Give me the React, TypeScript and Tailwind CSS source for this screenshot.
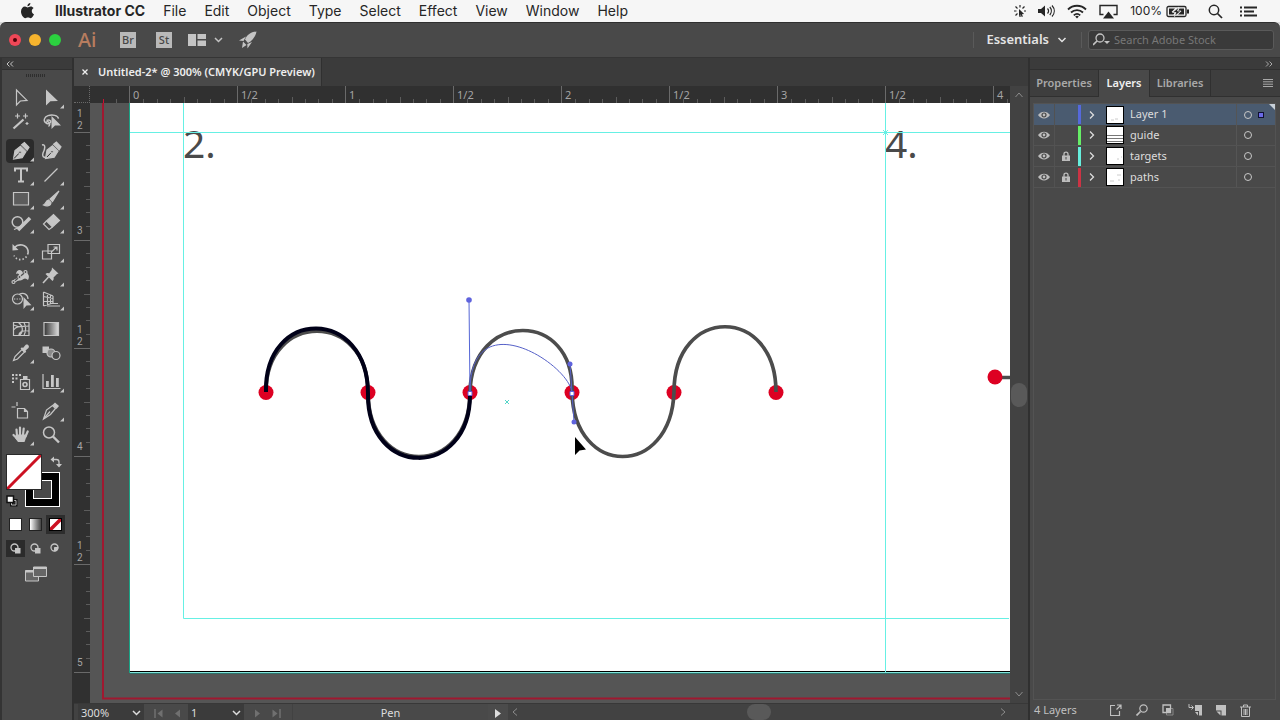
import type { ReactNode } from "react";

type Tool = { name: string; icon: ReactNode; more?: boolean; active?: boolean };
type Layer = { name: string; color: string; locked: boolean; selected?: boolean; sketch: string };

const nib = (
  <>
    <path d="M4.5 20 6 11.5l5.5-4.3 5.5 5.5-3.8 6z" fill="currentColor" />
    <path d="m12.6 5.8 2.8-2.2 4.6 4.7-1.9 3z" fill="currentColor" />
    <path d="m5 19.5 5.3-5.5" stroke="#2b2b2b" strokeWidth="1" />
    <circle cx="11" cy="13.2" r="1.3" fill="#2b2b2b" />
  </>
);

const toolGroups: Tool[][] = [
  [
    { name: "Selection", icon: <path d="M7.5 4v15l3.8-4 6.7-.6z" /> },
    { name: "Direct Selection", more: true, icon: <path d="M7 3.5v16l4.4-4.3 7.6-.2z" fill="currentColor" stroke="none" /> },
    {
      name: "Magic Wand",
      icon: (
        <>
          <path d="m4.5 18.5 10-9" strokeWidth="2.2" />
          <path d="M8.5 3.5v5M6 6h5M16.5 3.5v5M14 6h5M18 12v3M16.5 13.5h3" strokeWidth="1.2" />
        </>
      ),
    },
    {
      name: "Lasso",
      icon: (
        <>
          <path d="M7 13c-3-2-2-6 2-7.4 4.5-1.5 10-.2 10.5 3M7.500 10.5c3-1.5 5.5 1 3.500 2.500s-5 .5-3.500-1 5 2 2 4.500" strokeWidth="1.400" />
          <path d="M12.500 6v13l3.500-3.500 6 0z" fill="currentColor" stroke="none" />
        </>
      ),
    },
  ],
  [
    { name: "Pen", more: true, active: true, icon: nib },
    {
      name: "Curvature",
      icon: (
        <>
          <g transform="translate(2 -.5)">{nib}</g>
          <path d="M3 6c4-1 3 4 1 8-1 3 0 5 4 4.500" strokeWidth="1.500" />
        </>
      ),
    },
    { name: "Type", more: true, icon: <path d="M6 8.500V5.500h12v3M12 5.500v13M9 18.500h6" strokeWidth="2" /> },
    { name: "Line Segment", more: true, icon: <path d="m5.500 18.500 13-13" /> },
    { name: "Rectangle", more: true, icon: <path d="M4.500 5.500h15v12.500h-15z" fill="#5c5c5c" /> },
    {
      name: "Paintbrush",
      more: true,
      icon: (
        <>
          <path d="m20 4-9 8 2.500 2.500z" fill="currentColor" />
          <path d="M9.500 13c-3 .5-2 3.500-5 5 3 1.500 7.500 1 7.500-2.500z" fill="currentColor" />
        </>
      ),
    },
    {
      name: "Shaper",
      more: true,
      icon: (
        <>
          <circle cx="8.500" cy="11" r="5.300" strokeWidth="1.500" />
          <path d="m9 19 12-12" strokeWidth="3.500" />
          <path d="m5 18.500 5-2" />
        </>
      ),
    },
    {
      name: "Eraser",
      more: true,
      icon: (
        <>
          <path d="m7.500 10 7-6.500 6 6-7 6.500z" fill="currentColor" />
          <path d="m7.500 10-3 3 5.500 5.500 3.500-2.500" />
        </>
      ),
    },
  ],
  [
    {
      name: "Rotate",
      more: true,
      icon: (
        <>
          <path d="M5.500 7.500c4-4.500 12-3 13.500 3 .3 1.500.2 3-.5 4" strokeWidth="1.600" />
          <path d="M17.500 16.500c-3 4.500-10 4-12.500-1" strokeDasharray="1.500 2" strokeWidth="1.600" />
          <path d="M3.500 4v6.500l6-.5z" fill="currentColor" stroke="none" />
        </>
      ),
    },
    {
      name: "Scale",
      more: true,
      icon: (
        <>
          <path d="M9 4.500h11.500v9H9zM3.500 11h9v8h-9z" />
          <path d="m13 11.500 4.500-4.500M14.500 7h3.500v3.500" />
        </>
      ),
    },
    {
      name: "Width",
      more: true,
      icon: (
        <>
          <path d="M4 18c1-5 5-2 6-6 .5-3-2-3-3-2 .5-4 5-6 7-1 1.500 1 2-1 4-2-1 2 4 4 1 9-2-2-4-2-6 0-2.500 1-4 0-6 2z" fill="currentColor" stroke="none" />
          <path d="m4.500 18 12-10" stroke="#494949" />
          <circle cx="4.500" cy="18" r="1.500" />
          <circle cx="16.500" cy="8" r="1.500" fill="#494949" />
          <circle cx="10.500" cy="13" r="1.500" fill="#494949" />
        </>
      ),
    },
    {
      name: "Puppet Warp",
      more: true,
      icon: (
        <>
          <path d="m13 3.500 6.500 6-1.500.5-3.500 3.500c.5 1.500 0 2.500-1 3.500l-7-7c1-1 2.500-1.200 3.500-.5L12.700 6z" fill="currentColor" stroke="none" />
          <path d="m9.500 13-5.500 6" strokeWidth="1.600" />
        </>
      ),
    },
    {
      name: "Shape Builder",
      more: true,
      icon: (
        <>
          <circle cx="8.500" cy="11" r="5" />
          <path d="M10 6.500c5-3 9 .5 9 4.500" />
          <path d="M5 11h9" strokeDasharray="1.300 1.300" />
          <path d="M14.500 9v12l3-3.500 5-.3z" fill="currentColor" stroke="none" />
        </>
      ),
    },
    {
      name: "Perspective Grid",
      more: true,
      icon: (
        <>
          <path d="M4.500 4v14M8.500 5.500v11.500M11.500 7v9M14 8v7.500M4.500 4 14 8M4.500 8.500 14 10.500M4.500 13.500h9.500M4.500 18l9.500-3" />
          <path d="M8 18h13M13 15.500h6" strokeWidth="1" />
        </>
      ),
    },
  ],
  [
    {
      name: "Mesh",
      icon: (
        <>
          <path d="M4.500 5.500h15.500v13H4.500z" />
          <path d="M4.500 13c4-5 8-3 15.500-4M9.500 5.500c5 4 5 9 1 13M15 5.500c2 4 2 9 0 13M4.500 8l6 2M10 18c0-3 4-5 10-4" />
        </>
      ),
    },
    {
      name: "Gradient",
      icon: (
        <>
          <defs>
            <linearGradient id="toolGradient">
              <stop offset="0" stopColor="#333" />
              <stop offset="1" stopColor="#ddd" />
            </linearGradient>
          </defs>
          <path d="M5 5.500h14.500v13H5z" fill="url(#toolGradient)" />
        </>
      ),
    },
    {
      name: "Eyedropper",
      more: true,
      icon: (
        <>
          <path d="m4.500 19.500 1.500-4 7-7 2.500 2.500-7 7z" />
          <path d="m11.500 7.500 1.500-1.200 1 .7 2.500-3c2-1.500 4.500 1 3 3l-3 2.500.7 1-1.200 1.500z" fill="currentColor" stroke="none" />
        </>
      ),
    },
    {
      name: "Blend",
      icon: (
        <>
          <path d="M3.500 5.500H10V12H3.500z" fill="currentColor" stroke="none" />
          <circle cx="12" cy="12" r="4" fill="#8a8a8a" />
          <circle cx="17" cy="14.500" r="4" fill="#494949" />
        </>
      ),
    },
  ],
  [
    {
      name: "Symbol Sprayer",
      more: true,
      icon: (
        <>
          <path d="M11.500 9.500h9v10h-9z" />
          <path d="M14 6h4.500v3H14zM3 4h2v2H3zM6.500 4h2v2h-2zM10 4h2v2h-2zM3 7.500h2v2H3zM6.500 7.500h2v2h-2zM3 11h2v2H3z" fill="currentColor" stroke="none" />
          <circle cx="16" cy="14.500" r="2" strokeWidth="1.600" />
        </>
      ),
    },
    {
      name: "Column Graph",
      more: true,
      icon: (
        <>
          <path d="M4 4v14.500h17.500" />
          <path d="M7 11h2.800v6H7zM12 5h2.800v12H12zM17 8h2.800v9H17z" fill="currentColor" stroke="none" />
        </>
      ),
    },
  ],
  [
    { name: "Artboard", icon: <path d="M8.500 9.500h7l3 3v6.500h-10zM2.500 8h4M8 3v4M15.500 9.500V12.500h3" /> },
    {
      name: "Slice",
      more: true,
      icon: (
        <>
          <path d="m4.500 20 3-9 6-4.500 3 3-5 6z" />
          <path d="m13.500 6 2.500-2.500 4 3.500-2.500 3z" fill="currentColor" stroke="none" />
          <path d="m5 19.500 6-7" />
        </>
      ),
    },
    {
      name: "Hand",
      more: true,
      icon: (
        <>
          <path d="M8 13 7.500 6.500M11 12V4.500M14 12l.7-6.500M16.500 13.500l2.200-5M8.500 16 4.500 12" strokeWidth="2.200" strokeLinecap="round" />
          <path d="M7 11.500h9.500l1 2-2 5.500H9l-3-4z" fill="currentColor" stroke="none" />
        </>
      ),
    },
    {
      name: "Zoom",
      icon: (
        <>
          <circle cx="10" cy="9.500" r="5.500" strokeWidth="1.500" />
          <path d="m14 13.500 6 6" strokeWidth="2.400" />
        </>
      ),
    },
  ],
];

const layers: Layer[] = [
  { name: "Layer 1", color: "bg-[#5569dc]", locked: false, selected: true, sketch: "M4 13h3M8 12h3" },
  { name: "guide", color: "bg-[#66ee66]", locked: false, sketch: "" },
  { name: "targets", color: "bg-[#66eedd]", locked: true, sketch: "M10 11h2M14 9h1" },
  { name: "paths", color: "bg-[#cc3344]", locked: true, sketch: "M3 12h4M10 6h4M11 11h2" },
];

const menus = ["File", "Edit", "Object", "Type", "Select", "Effect", "View", "Window", "Help"];
const rulerX = ["0", "1/2", "1", "1/2", "2", "1/2", "3", "1/2", "4"];
const rulerY = ["12", "3", "12", "4", "12", "5"];
const ticks = [1, 2, 3, 4, 5, 6, 7];

function Svg({ w, h, children, className = "" }: { w: number; h: number; children: ReactNode; className?: string }) {
  return (
    <svg width={w} height={h} viewBox={`0 0 ${w} ${h}`} fill="none" stroke="currentColor" className={`shrink-0 ${className}`} aria-hidden="true">
      {children}
    </svg>
  );
}

function MenuBar() {
  return (
    <header className="flex h-[22px] shrink-0 items-center bg-[#f6f6f6] text-sm leading-5 text-[#262626]">
      <button aria-label="Apple" className="ml-5 mr-5">
        <Svg w={15} h={18}>
          <path
            d="M10.400 1c.1 1.800-1.300 3.300-3 3.300C7.300 2.600 8.700 1.100 10.400 1zM7.600 5.400c.8 0 1.700-.8 3.100-.8 1.100 0 2.200.6 2.900 1.500-2.600 1.500-2.200 5.100.4 6.200-.6 1.700-2 3.900-3.300 3.900-1 0-1.500-.6-2.700-.6-1.300 0-1.800.6-2.700.6C3.300 16.200 1 12.600 1 9.600c0-3 1.900-5 4-5 1.200 0 2 .8 2.600.8z"
            fill="currentColor"
            stroke="none"
          />
        </Svg>
      </button>
      <nav className="flex flex-1 gap-[18px]">
        <button className="whitespace-nowrap font-bold">Illustrator CC</button>
        {menus.map((m) => (
          <button key={m}>{m}</button>
        ))}
      </nav>
      <div className="flex items-center pr-[22px]">
        <Svg w={14} h={14} className="mr-[10px]">
          <path d="M7 1v2.500M2.500 2.500 4.500 4.500M1 7h2.500M2.500 11.500l2-2M11.500 2.500l-2 2M13 7h-2M7 13v-2" strokeWidth="1.200" />
          <path d="M6 5v7l1.700-1.400 1 2.400 1.200-.5-1-2.300 2.200-.2z" fill="currentColor" stroke="none" />
        </Svg>
        <Svg w={18} h={14} className="mr-3">
          <path d="M1 5h3l4-3.500v11L4 9H1z" fill="currentColor" stroke="none" />
          <path d="M10.500 4.500c1.300 1.500 1.300 3.500 0 5M12.800 3c2 2.300 2 5.700 0 8M15 1.500c3 3.300 3 7.700 0 11" strokeWidth="1.200" />
        </Svg>
        <Svg w={20} h={15} className="mr-3">
          <path d="M1 5.500c5-5 13-5 18 0M4 8.500c3.400-3.300 8.600-3.300 12 0M6.800 11.300c2-1.800 4.400-1.800 6.400 0" strokeWidth="1.800" />
          <path d="m10 14.500-1.800-2c1-1 2.600-1 3.600 0z" fill="currentColor" stroke="none" />
        </Svg>
        <Svg w={19} h={15} className="mr-3">
          <path d="M4.500 10.500H1v-9h17v9h-3.500" strokeWidth="1.400" />
          <path d="m9.500 7.500 5.500 7H4z" fill="currentColor" stroke="none" />
        </Svg>
        <span className="mr-1 text-xs">100%</span>
        <Svg w={24} h={13} className="mr-[18px]">
          <rect x="1" y="1.500" width="19" height="10" rx="1.500" strokeWidth="1.300" />
          <path d="M3 3.500h6L5.500 7H9l-1.500 2.500H3zM18 9.500h-6L15.500 6H12l1.500-2.500H18z" fill="currentColor" stroke="none" />
          <path d="M13 2 6.500 7.500H10L8.500 11.500 15 6h-3.500z" fill="currentColor" stroke="#f6f6f6" strokeWidth=".7" />
          <path d="M22 4.500v4" strokeWidth="2" />
        </Svg>
        <Svg w={15} h={15} className="mr-4">
          <circle cx="6" cy="6" r="4.700" strokeWidth="1.500" />
          <path d="m9.500 9.500 4.500 4.500" strokeWidth="1.700" />
        </Svg>
        <Svg w={19} h={13}>
          <path d="M5 2.500h13M5 6.500h10M5 10.500h13M1 2.500h2M1 6.500h2M1 10.500h2" strokeWidth="1.800" />
        </Svg>
      </div>
    </header>
  );
}

function AppBar() {
  return (
    <div className="flex h-[35px] shrink-0 items-center rounded-t-md border-t border-[#2f2f2f] bg-[#494949] text-[#c4c4c4]">
      <div className="ml-[9px] flex gap-2">
        <button aria-label="Close window" className="flex size-3 items-center justify-center rounded-full bg-[#ef4757]">
          <span className="size-1 rounded-full bg-[#4a0008]" />
        </button>
        <button aria-label="Minimize window" className="size-3 rounded-full bg-[#f6b42e]" />
        <button aria-label="Zoom window" className="size-3 rounded-full bg-[#2bd03f]" />
      </div>
      <span className="ml-[17px] w-[22px] text-xl leading-6 font-medium text-[#b87d5f]">Ai</span>
      <button className="ml-5 h-4 w-4 bg-[#b9b9b9] text-[11px] leading-4 font-medium text-[#474747]">Br</button>
      <button className="ml-5 h-4 w-4 bg-[#b9b9b9] text-[11px] leading-4 font-medium text-[#474747]">St</button>
      <button aria-label="Arrange documents" className="ml-4 flex items-center gap-2">
        <Svg w={18} h={12}>
          <path d="M0 0h8v12H0zM9.500 0H18v5H9.500zM9.500 6.500H18V12H9.500z" fill="currentColor" stroke="none" />
        </Svg>
        <Svg w={9} h={6}>
          <path d="m1 1 3.500 3.500L8 1" strokeWidth="1.500" />
        </Svg>
      </button>
      <button aria-label="GPU performance" className="ml-4">
        <Svg w={18} h={18}>
          <path d="M17.500.500C12 1 8 3.500 6 8.500l3 3.500c4-2 7.500-6 8.500-11.500z" fill="currentColor" stroke="none" />
          <path d="M7 5.500 0 9.500l4.500.5zM13 11l-4.500 6.500-.2-4.500zM4 10.500 7.500 14l-4.500 3z" fill="currentColor" stroke="none" />
        </Svg>
      </button>
      <div className="flex-1" />
      <div className="h-4 w-px bg-[#5a5a5a]" />
      <button className="ml-3 flex items-center gap-2 text-[13px] font-semibold text-[#e4e4e4]">
        Essentials
        <Svg w={10} h={6}>
          <path d="m1.500 1 3.500 3.500L8.500 1" strokeWidth="1.500" />
        </Svg>
      </button>
      <div className="ml-[14px] h-4 w-px bg-[#5a5a5a]" />
      <label className="mx-[6px] flex h-5 w-[186px] items-center rounded-[3px] border border-[#5a5a5a] bg-[#3a3a3a] pl-1">
        <Svg w={17} h={14}>
          <circle cx="7" cy="5" r="4" strokeWidth="1.300" />
          <path d="M4 8 0 12" strokeWidth="1.700" />
          <path d="M11 8h6l-3 3z" fill="currentColor" stroke="none" />
        </Svg>
        <input aria-label="Search Adobe Stock" placeholder="Search Adobe Stock" className="ml-1 w-full bg-transparent text-[11px] outline-none placeholder:text-[#777777]" />
      </label>
    </div>
  );
}

function Toolbar() {
  return (
    <aside className="flex w-[72px] shrink-0 flex-col border-l-2 border-[#343434] bg-[#494949] text-[#c6c6c6]">
      <div className="flex h-3 items-center border-b border-[#303030] bg-[#3b3b3b] pl-1">
        <Svg w={8} h={6}>
          <path d="M3.500.5 1 3l2.500 2.500M7 .5 4.500 3 7 5.500" />
        </Svg>
      </div>
      <div className="flex h-4 gap-px pl-6 pt-1">
        {Array.from({ length: 10 }, (_, i) => (
          <span key={i} className="h-[3px] w-px bg-[#2e2e2e]" />
        ))}
      </div>
      <div className="flex flex-col gap-[5px] pl-1">
        {toolGroups.map((group, i) => (
          <div key={i} className="grid grid-cols-[30px_30px]">
            {group.map((t) => (
              <button key={t.name} aria-label={t.name} title={t.name} className={t.active ? "h-6 w-7 rounded-sm bg-[#2b2b2b]" : "h-6"}>
                <svg width="30" height="24" viewBox="-3 0 30 24" fill="none" stroke="currentColor" strokeWidth="1.200" aria-hidden="true" className="max-w-none">
                  {t.icon}
                  {t.more && <path d="M25 18.500v4h-4z" fill="currentColor" stroke="none" />}
                </svg>
              </button>
            ))}
          </div>
        ))}
      </div>
      <div className="relative mt-[7px] ml-1 h-[54px] w-14">
        <button aria-label="Stroke" className="absolute left-[19px] top-[18px] flex size-[35px] items-center justify-center border border-white bg-black">
          <span className="size-[19px] border border-white bg-[#494949]" />
        </button>
        <button aria-label="Fill" className="absolute left-0 top-0 size-9 border border-[#2a2a2a] bg-white">
          <Svg w={34} h={34}>
            <path d="M0 34 34 0" stroke="#cc1122" strokeWidth="3" />
          </Svg>
        </button>
        <button aria-label="Swap fill and stroke" className="absolute left-11 top-0.5">
          <Svg w={12} h={12}>
            <path d="M2.500 3.500h4c1.500 0 2.500 1 2.500 2.500v3" strokeWidth="1.300" />
            <path d="M4 .5v6l-3.500-3zM6 8h6l-3 3.500z" fill="currentColor" stroke="none" />
          </Svg>
        </button>
        <button aria-label="Default fill and stroke" className="absolute left-0 top-[41px]">
          <Svg w={12} h={12}>
            <path d="M5.500 5.500H10V10H5.500z" stroke="#111" strokeWidth="3" />
            <path d="M5.500 5.500H10V10H5.500z" stroke="#bbb" strokeWidth="1" />
            <path d="M1 1h6.500v6.500H1z" fill="#fff" stroke="#111" strokeWidth="1.500" />
          </Svg>
        </button>
      </div>
      <div className="mt-[7px] ml-[3px] grid w-[60px] grid-cols-3 place-items-center">
        <button aria-label="Color" className="flex size-[19px] items-center justify-center">
          <span className="size-[13px] border border-[#222222] bg-white" />
        </button>
        <button aria-label="Gradient fill" className="flex size-[19px] items-center justify-center">
          <span className="size-[13px] border border-[#222222] bg-linear-to-r from-white to-[#444444]" />
        </button>
        <button aria-label="None" className="flex size-[19px] items-center justify-center bg-[#2d2d2d]">
          <span className="size-[13px] border border-black bg-white">
            <Svg w={11} h={11}>
              <path d="M0 11 11 0" stroke="#cc1122" strokeWidth="3.500" />
            </Svg>
          </span>
        </button>
      </div>
      <div className="mt-[6px] ml-[3px] grid w-[60px] grid-cols-3 place-items-center">
        {["Draw Normal", "Draw Behind", "Draw Inside"].map((mode, i) => (
          <button key={mode} aria-label={mode} className={i === 0 ? "flex h-[17px] w-[19px] items-center justify-center bg-[#2b2b2b]" : "flex h-[17px] w-[19px] items-center justify-center"}>
            <Svg w={11} h={11}>
              <circle cx="4.500" cy="4.500" r="3.500" strokeWidth="1.300" />
              {i < 2 ? (
                <path d="M5 5h5.500v5.500H5z" fill="currentColor" stroke="none" />
              ) : (
                <path d="M4.500 4.500H8A3.500 3.500 0 0 1 4.500 8z" fill="currentColor" />
              )}
            </Svg>
          </button>
        ))}
      </div>
      <button aria-label="Change screen mode" className="mt-[9px] ml-[23px] self-start">
        <Svg w={22} h={16}>
          <path d="M.5 4.500h13v10.500H.5z" fill="#666" />
          <path d="M8.500 1h13v9.500h-13z" fill="#666" />
          <path d="M8.500 2h13M.5 5.500h8" strokeWidth="2" />
        </Svg>
      </button>
    </aside>
  );
}

function TopRuler() {
  return (
    <div className="flex h-[17px] shrink-0 overflow-hidden bg-[#303030] text-[11px] leading-[17px] text-[#a4a4a4]">
      <div className="h-full w-4 shrink-0 border-r border-b border-dotted border-[#6a6a6a]" />
      <div className="flex w-[39px] shrink-0 items-end justify-end gap-3 pr-3">
        <span className="h-1 w-px bg-[#cc1133]" />
        <span className="h-1 w-px bg-[#5c5c5c]" />
      </div>
      {rulerX.map((label, i) => (
        <div key={i} className="grid w-[108px] shrink-0 grid-cols-8 items-end border-l border-[#6a6a6a]">
          <span className="self-start whitespace-nowrap pl-[3px]">{label}</span>
          {ticks.map((t) => (
            <span key={t} className={t === 4 ? "h-[6px] w-px bg-[#5c5c5c]" : "h-1 w-px bg-[#5c5c5c]"} />
          ))}
        </div>
      ))}
    </div>
  );
}

function SideRuler() {
  return (
    <div className="w-4 shrink-0 overflow-hidden bg-[#303030] font-['Roboto'] text-[10px] leading-3 text-[#a4a4a4]">
      {rulerY.map((label, i) => (
        <div key={i} className={i === 0 ? "flex h-[30px] items-end border-b border-[#6a6a6a]" : "grid h-[108px] grid-cols-2 border-b border-[#6a6a6a]"}>
          <span className={label.length > 1 ? "flex flex-col self-end pl-[3px]" : "flex flex-col self-end pb-[3px] pl-[3px]"}>
            {label.split("").map((c) => (
              <span key={c}>{c}</span>
            ))}
          </span>
          {i > 0 && (
            <span className="grid grid-rows-8 justify-items-end">
              {ticks.map((t) => (
                <span key={t} className={t === 4 ? "h-px w-[6px] self-end bg-[#5c5c5c]" : "h-px w-1 self-end bg-[#5c5c5c]"} />
              ))}
            </span>
          )}
        </div>
      ))}
    </div>
  );
}

function Canvas() {
  return (
    <main className="relative min-w-0 flex-1 overflow-hidden bg-[#555555]">
      <svg width="920" height="600" viewBox="90 103 920 600" fill="none" className="absolute left-0 top-0 max-w-none">
        <path d="M103 103v595.500h910" stroke="#a01830" strokeWidth="2" />
        <path d="M130 103h880v568H130z" fill="#fff" />
        <path d="M130 671.500h880" stroke="#000" />
        <path d="M130 673.500h880" stroke="#2f7069" />
        <path d="M129.500 103v570" stroke="#1aa385" />
        <path d="M130 672.500h880" stroke="#7fe3da" />
        <text x="183" y="158" fontSize="39" fill="#4a4a4a" fontFamily="'Noto Sans', sans-serif">2.</text>
        <text x="885" y="158" fontSize="39" fill="#4a4a4a" fontFamily="'Noto Sans', sans-serif">4.</text>
        <path d="M183.500 103v515.500H1009M130 132.500h880" stroke="#66f0e4" />
        <path d="M885.500 103v569" stroke="#66f0e4" />
        <path d="m883 130 5 5m0-5-5 5" stroke="#66f0e4" />
        {[266, 368, 470, 572, 674, 776].map((x) => (
          <circle key={x} cx={x} cy="392.500" r="7.500" fill="#dd0022" />
        ))}
        <path d="M995 377.500h15" stroke="#4c4c4c" strokeWidth="3.500" />
        <circle cx="995" cy="377" r="7.500" fill="#dd0022" />
        <path
          d="M266 392C266 311 368 311 368 392C368 478 470 478 470 392C472 310 575 310 572 392C574 478 671 478 674 392C674 305 776 305 776 392"
          stroke="#4c4c4c"
          strokeWidth="3.700"
        />
        <path d="M266 392C264 307 368 307 368 394C367 479 470 479 470 395" stroke="#000018" strokeWidth="4" />
        <path d="M470 393 469 300" stroke="#5566d6" />
        <path d="M470 393C469 300 570 364 572 393M570 364 572 393 574 422" stroke="#5560c8" />
        <g fill="#5f63dd">
          <circle cx="469" cy="300" r="2.800" />
          <circle cx="570" cy="364" r="2.500" />
          <circle cx="574" cy="422" r="2.500" />
        </g>
        <path d="M468 391.500h4v4h-4zM570 391.500h4v4h-4z" fill="#fff" stroke="#5f63dd" />
        <path d="m505 400 4 4m0-4-4 4" stroke="#55d5c8" />
        <path d="M575 437v18l4.500-4.500 6.500-1z" fill="#000" />
      </svg>
    </main>
  );
}

function StatusBar() {
  return (
    <footer className="flex h-[17px] shrink-0 items-stretch border-t border-[#383838] bg-[#424242] text-[11px] leading-4 text-[#dddddd]">
      <div className="relative ml-1 flex w-[66px] items-center bg-[#3b3b3b] pt-0.5">
        <select aria-label="Zoom level" className="w-full appearance-none bg-transparent pl-[3px] outline-none" defaultValue="300%">
          <option>300%</option>
        </select>
        <Svg w={9} h={6} className="pointer-events-none absolute right-[3px]">
          <path d="m1 1 3.500 3.500L8 1" strokeWidth="1.500" />
        </Svg>
      </div>
      <div className="flex items-center gap-3 bg-[#494949] pt-0.5 pl-[10px] pr-2 text-[#707070]">
        <button aria-label="First artboard">
          <Svg w={9} h={9}>
            <path d="M1 0v9" strokeWidth="1.500" />
            <path d="M8.500.5v8l-5-4z" fill="currentColor" stroke="none" />
          </Svg>
        </button>
        <button aria-label="Previous artboard">
          <Svg w={5} h={9}>
            <path d="M5 .5v8l-5-4z" fill="currentColor" stroke="none" />
          </Svg>
        </button>
      </div>
      <div className="relative flex w-[56px] items-center bg-[#3b3b3b] pt-0.5">
        <select aria-label="Artboard" className="w-full appearance-none bg-transparent pl-[3px] outline-none" defaultValue="1">
          <option>1</option>
        </select>
        <Svg w={9} h={6} className="pointer-events-none absolute right-[3px]">
          <path d="m1 1 3.500 3.500L8 1" strokeWidth="1.500" />
        </Svg>
      </div>
      <div className="flex items-center gap-3 bg-[#494949] px-[11px] pt-0.5 text-[#707070]">
        <button aria-label="Next artboard">
          <Svg w={5} h={9}>
            <path d="M0 .5v8l5-4z" fill="currentColor" stroke="none" />
          </Svg>
        </button>
        <button aria-label="Last artboard">
          <Svg w={9} h={9}>
            <path d="M8 0v9" strokeWidth="1.500" />
            <path d="M.5.5v8l5-4z" fill="currentColor" stroke="none" />
          </Svg>
        </button>
      </div>
      <div className="w-[196px] border-l border-[#424242] bg-[#494949] pt-px text-center">Pen</div>
      <button aria-label="Status options" className="flex w-5 items-center justify-center bg-[#4b4b4b] pt-0.5">
        <Svg w={6} h={9}>
          <path d="M0 0v9l6-4.500z" fill="currentColor" stroke="none" />
        </Svg>
      </button>
      <div className="flex flex-1 items-center justify-between pl-1 pr-[22px] text-[#8c8c8c]">
        <button aria-label="Scroll left">
          <Svg w={6} h={8}>
            <path d="M5 .5 1 4l4 3.500" />
          </Svg>
        </button>
        <span className="h-4 w-6 rounded-full bg-[#595959]" />
        <button aria-label="Scroll right">
          <Svg w={6} h={8}>
            <path d="m1 .5 4 3.500-4 3.500" />
          </Svg>
        </button>
      </div>
    </footer>
  );
}

function LayerRow({ layer }: { layer: Layer }) {
  return (
    <li className={layer.selected ? "relative flex h-[21px] items-center bg-[#4a5b70]" : "relative flex h-[21px] items-center border-b border-[#535353]"}>
      <button aria-label={`Toggle ${layer.name} visibility`} className="flex w-5 justify-center text-[#bdbdbd]">
        <Svg w={12} h={8}>
          <path d="M0 4c3-4.500 9-4.500 12 0-3 4.500-9 4.500-12 0z" fill="currentColor" stroke="none" />
          <circle cx="6" cy="4" r="2" fill="currentColor" stroke="#444" strokeWidth="1.200" />
        </Svg>
      </button>
      <button aria-label={`Lock ${layer.name}`} className="flex h-full w-[22px] items-center justify-center border-l border-[#525252] text-[#bdbdbd]">
        {layer.locked && (
          <Svg w={8} h={10}>
            <path d="M0 4.500h8V10H0z" fill="currentColor" stroke="none" />
            <path d="M2 5V3c0-2.500 4-2.500 4 0v2" strokeWidth="1.300" />
            <path d="M4 6v2.500" stroke="#494949" />
          </Svg>
        )}
      </button>
      <span className={`ml-0.5 h-[19px] w-[3px] ${layer.color}`} />
      <button aria-label={`Expand ${layer.name}`} className="flex w-[21px] justify-center text-[#dddddd]">
        <Svg w={6} h={8}>
          <path d="M1 .5 4.500 4 1 7.500" strokeWidth="1.300" />
        </Svg>
      </button>
      <span className="ml-1 size-[18px] border border-black bg-white">
        <Svg w={16} h={16}>
          {layer.name === "guide" ? <path d="M0 8.500h16M0 11.500h16M0 14.500h16" stroke="#777" /> : <path d={layer.sketch} stroke="#ccc" />}
        </Svg>
      </span>
      <span className="flex-1 pl-[6px] text-[11px] text-[#dddddd]">{layer.name}</span>
      <button aria-label={`Target ${layer.name}`} className="flex h-full w-[22px] items-center justify-center border-l border-[#555555]">
        <span className="size-2 rounded-full border border-[#c8c8c8]" />
      </button>
      <span className="w-[17px]">{layer.selected && <span className="block size-[6px] border border-[#111133] bg-[#6a6ae6]" />}</span>
      {layer.selected && (
        <Svg w={6} h={6} className="absolute right-0 top-0">
          <path d="M0 0h6v6z" fill="#c8d0d8" stroke="none" />
        </Svg>
      )}
    </li>
  );
}

function LayersPanel() {
  return (
    <aside className="flex w-[252px] shrink-0 flex-col border-l-2 border-[#303030] bg-[#494949] text-[11px] text-[#a9a9a9]">
      <div className="flex h-3 items-center justify-end border-b border-[#303030] bg-[#3b3b3b] pr-[7px]">
        <Svg w={8} h={6}>
          <path d="M1 .5 3.500 3 1 5.500M4.500.5 7 3 4.500 5.500" />
        </Svg>
      </div>
      <div className="flex h-[27px] items-stretch border-b border-[#303030] bg-[#3e3e3e] font-semibold" role="tablist">
        <button role="tab" aria-selected="false" className="w-[69px] border-r border-[#303030] text-center">Properties</button>
        <button role="tab" aria-selected="true" className="-mb-px w-[51px] border-r border-[#303030] bg-[#494949] text-center text-[#f0f0f0]">Layers</button>
        <button role="tab" aria-selected="false" className="w-[61px] border-r border-[#303030] text-center">Libraries</button>
        <button aria-label="Panel menu" className="ml-auto pr-[7px]">
          <Svg w={10} h={8}>
            <path d="M0 .5h10M0 2.800h10M0 5.200h10M0 7.500h10" />
          </Svg>
        </button>
      </div>
      <div className="ml-[3px] mr-1 mt-[6px] flex-1 border border-[#535353]">
        <ul>
          {layers.map((l) => (
            <LayerRow key={l.name} layer={l} />
          ))}
        </ul>
      </div>
      <div className="flex h-5 items-center pl-1 pr-[29px] text-[#c0c0c0]">
        <span className="flex-1">4 Layers</span>
        <div className="flex gap-[14px]">
          <button aria-label="Collect for export">
            <Svg w={12} h={12}>
              <path d="M5 1.500H.5v10h9V7M7 1h4v4M11 1 6.500 5.500" strokeWidth="1.200" />
            </Svg>
          </button>
          <button aria-label="Locate object">
            <Svg w={12} h={12}>
              <circle cx="7.500" cy="4.500" r="3.700" strokeWidth="1.200" />
              <path d="m4.500 7.500-4 4" strokeWidth="1.700" />
            </Svg>
          </button>
          <button aria-label="Make clipping mask">
            <Svg w={12} h={12}>
              <path d="M4.500 4.500H11V11H4.500z" stroke="#888" />
              <path d="M1 1h7.500v7.500H1z" strokeWidth="1.300" />
              <path d="M4 4h4v4H4z" fill="currentColor" stroke="none" />
            </Svg>
          </button>
          <button aria-label="New sublayer">
            <Svg w={14} h={12}>
              <path d="M1 0v3.500h4M3.500 1.500 5.500 3.500 3.500 5.500" />
              <path d="M7 1h7v10.500h-3V7H7z" fill="currentColor" stroke="none" />
              <path d="M7 8h3v3.500z" fill="currentColor" stroke="none" />
            </Svg>
          </button>
          <button aria-label="New layer">
            <Svg w={10} h={12}>
              <path d="M0 1h10v10.500H5.500V6.500H0z" fill="currentColor" stroke="none" />
              <path d="M.5 7.500h4v4z" fill="currentColor" stroke="none" />
            </Svg>
          </button>
          <button aria-label="Delete selection">
            <Svg w={11} h={13}>
              <path d="M0 3h11M3.500 3V1h4v2M1.500 3v9.500h8V3M4 5v6M5.500 5v6M7 5v6" />
            </Svg>
          </button>
        </div>
      </div>
    </aside>
  );
}

export default function App() {
  return (
    <div className="flex h-screen flex-col overflow-hidden bg-[#d8d8d8] font-['Noto_Sans',sans-serif]">
      <div className="font-['Inter',sans-serif]">
        <MenuBar />
      </div>
      <AppBar />
      <div className="flex min-h-0 flex-1 border-t border-[#353535] bg-[#303030]">
        <Toolbar />
        <div className="ml-0.5 flex min-w-0 flex-1 flex-col">
          <div className="flex h-7 shrink-0 bg-[#3b3b3b]">
            <div className="flex items-center border-r border-[#303030] bg-[#494949] pr-[6px] pl-2 text-[11px] font-semibold text-[#eeeeee]">
              <button aria-label="Close document" className="mr-[10px]">
                <Svg w={6} h={6}>
                  <path d="m.5.5 5 5m0-5-5 5" strokeWidth="1.300" />
                </Svg>
              </button>
              Untitled-2* @ 300% (CMYK/GPU Preview)
            </div>
          </div>
          <div className="flex min-h-0 flex-1">
            <div className="flex min-w-0 flex-1 flex-col">
              <TopRuler />
              <div className="flex min-h-0 flex-1">
                <SideRuler />
                <Canvas />
              </div>
            </div>
            <div className="flex w-[18px] shrink-0 flex-col items-center justify-between bg-[#424242] py-[6px] text-[#8c8c8c]">
              <button aria-label="Scroll up">
                <Svg w={8} h={6} className="block">
                  <path d="m.5 5 3.500-4 3.500 4" />
                </Svg>
              </button>
              <span className="h-6 w-4 rounded-full bg-[#595959]" />
              <button aria-label="Scroll down">
                <Svg w={8} h={6} className="block">
                  <path d="m.5 1 3.500 4 3.500-4" />
                </Svg>
              </button>
            </div>
          </div>
          <StatusBar />
        </div>
        <LayersPanel />
      </div>
    </div>
  );
}
